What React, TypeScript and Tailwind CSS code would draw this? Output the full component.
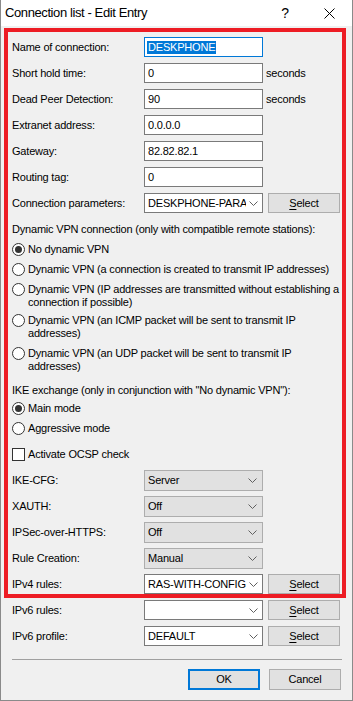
import React from 'react';

const Chevron = () => (
  <svg width="9" height="5" viewBox="0 0 9 5" className="shrink-0">
    <polyline points="0.5,0.5 4.5,4.5 8.5,0.5" fill="none" stroke="#606060" strokeWidth="1" />
  </svg>
);

const SelectButton = () => (
  <button className="ml-[5px] w-[72px] h-[20px] bg-[#e1e1e1] border border-[#adadad] flex items-center justify-center text-black">
    <span><span className="underline underline-offset-2">S</span>elect</span>
  </button>
);

function Row({ label, children }: { label: string; children: React.ReactNode }) {
  return (
    <div className="flex items-center h-[20px]">
      <div className="w-[132px] shrink-0">{label}</div>
      {children}
    </div>
  );
}

function TextInput({ value, focused }: { value: string; focused?: boolean }) {
  return (
    <div
      className={`w-[119px] h-[20px] bg-white border flex items-center pl-[2px] ${
        focused ? 'border-[#0078d7]' : 'border-[#7a7a7a]'
      }`}
    >
      {focused ? (
        <span className="bg-[#0078d7] text-white leading-[13px] px-px">{value}</span>
      ) : (
        <span className="pl-px">{value}</span>
      )}
    </div>
  );
}

// editable combo: white field with chevron on the right
function Combo({ value }: { value: string }) {
  return (
    <div className="w-[119px] h-[20px] bg-white border border-[#7a7a7a] flex items-center">
      <div className="w-[101px] pl-[3px] overflow-hidden whitespace-nowrap">{value}</div>
      <div className="flex-1 flex items-center justify-center pr-px">
        <Chevron />
      </div>
    </div>
  );
}

// non-editable dropdown: grey face
function DropDown({ value }: { value: string }) {
  return (
    <div className="w-[119px] h-[21px] bg-[#e1e1e1] border border-[#adadad] flex items-center">
      <div className="flex-1 pl-[3px]">{value}</div>
      <div className="w-[19px] flex items-center justify-center pr-px">
        <Chevron />
      </div>
    </div>
  );
}

function Radio({ checked, children, className }: { checked?: boolean; children: React.ReactNode; className?: string }) {
  return (
    <div className={`flex items-start leading-[13px] ${className ?? ''}`}>
      <div className="w-[13px] h-[13px] shrink-0 rounded-full border border-[#333] bg-white flex items-center justify-center">
        {checked && <div className="w-[7px] h-[7px] rounded-full bg-[#333]" />}
      </div>
      <div className="ml-[3px] whitespace-nowrap">{children}</div>
    </div>
  );
}

export default function App() {
  return (
    <div className="w-[353px] h-[701px] flex flex-col bg-[#f0f0f0] border-x border-b border-[#8a8a8a] text-[11px] tracking-[-0.2px] text-black font-['Liberation_Sans',Arial,sans-serif]">
      {/* title bar */}
      <div className="h-[26px] shrink-0 bg-white flex items-center">
        <div className="pl-[4px] flex-1 text-[13px] tracking-[-0.4px]">Connection list - Edit Entry</div>
        <div className="w-[26px] text-center text-[14px] mr-[21px]">?</div>
        <div className="w-[20px] flex items-center justify-center mr-[13px]">
          <svg width="11" height="11" viewBox="0 0 11 11">
            <path d="M0.5 0.5 L10.5 10.5 M10.5 0.5 L0.5 10.5" stroke="#000" strokeWidth="1" />
          </svg>
        </div>
      </div>

      {/* highlighted block */}
      <div className="mt-[2px] ml-[3px] w-[342px] border-4 border-[#ed1c24] pl-[4px] pt-[5px] flex flex-col">
        <div className="flex flex-col gap-[6px]">
          <Row label="Name of connection:">
            <TextInput value="DESKPHONE" focused />
          </Row>
          <Row label="Short hold time:">
            <TextInput value="0" />
            <span className="ml-[3px]">seconds</span>
          </Row>
          <Row label="Dead Peer Detection:">
            <TextInput value="90" />
            <span className="ml-[3px]">seconds</span>
          </Row>
          <Row label="Extranet address:">
            <TextInput value="0.0.0.0" />
          </Row>
          <Row label="Gateway:">
            <TextInput value="82.82.82.1" />
          </Row>
          <Row label="Routing tag:">
            <TextInput value="0" />
          </Row>
          <Row label="Connection parameters:">
            <Combo value="DESKPHONE-PARAMETERS" />
            <SelectButton />
          </Row>
        </div>

        <div className="mt-[10px] leading-[13px] whitespace-nowrap">Dynamic VPN connection (only with compatible remote stations):</div>
        <Radio checked className="mt-[7px]">No dynamic VPN</Radio>
        <Radio className="mt-[7px]">Dynamic VPN (a connection is created to transmit IP addresses)</Radio>
        <Radio className="mt-[7px]">
          Dynamic VPN (IP addresses are transmitted without establishing a
          <br />
          connection if possible)
        </Radio>
        <Radio className="mt-[5px]">
          Dynamic VPN (an ICMP packet will be sent to transmit IP
          <br />
          addresses)
        </Radio>
        <Radio className="mt-[7px]">
          Dynamic VPN (an UDP packet will be sent to transmit IP
          <br />
          addresses)
        </Radio>

        <div className="mt-[11px] leading-[13px] whitespace-nowrap">IKE exchange (only in conjunction with "No dynamic VPN"):</div>
        <Radio checked className="mt-[5px]">Main mode</Radio>
        <Radio className="mt-[7px]">Aggressive mode</Radio>

        <div className="mt-[13px] flex items-center leading-[13px]">
          <div className="w-[13px] h-[13px] border border-[#333] bg-white" />
          <span className="ml-[3px]">Activate OCSP check</span>
        </div>

        <div className="mt-[9px] flex flex-col gap-[5px]">
          <div className="flex items-center h-[21px]">
            <div className="w-[132px]">IKE-CFG:</div>
            <DropDown value="Server" />
          </div>
          <div className="flex items-center h-[21px]">
            <div className="w-[132px]">XAUTH:</div>
            <DropDown value="Off" />
          </div>
          <div className="flex items-center h-[21px]">
            <div className="w-[132px]">IPSec-over-HTTPS:</div>
            <DropDown value="Off" />
          </div>
          <div className="flex items-center h-[21px]">
            <div className="w-[132px]">Rule Creation:</div>
            <DropDown value="Manual" />
          </div>
          <Row label="IPv4 rules:">
            <Combo value="RAS-WITH-CONFIG" />
            <SelectButton />
          </Row>
        </div>
      </div>

      {/* outside the highlight */}
      <div className="mt-[2px] pl-[11px] flex flex-col gap-[6px]">
        <Row label="IPv6 rules:">
          <Combo value="" />
          <SelectButton />
        </Row>
        <Row label="IPv6 profile:">
          <Combo value="DEFAULT" />
          <SelectButton />
        </Row>
      </div>

      <div className="mt-[13px] ml-[11px] w-[330px] h-px bg-[#a0a0a0]" />

      <div className="mt-[9px] flex justify-end gap-[9px] pr-[11px]">
        <button className="w-[72px] h-[21px] bg-[#e1e1e1] border-2 border-[#0078d7] text-black">OK</button>
        <button className="w-[72px] h-[21px] bg-[#e1e1e1] border border-[#adadad] text-black">Cancel</button>
      </div>
    </div>
  );
}
